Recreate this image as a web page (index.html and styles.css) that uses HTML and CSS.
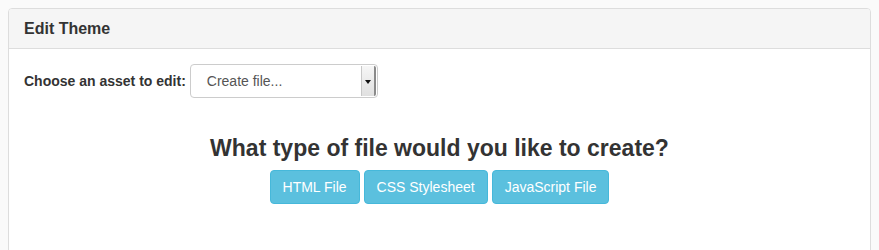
FILE: index.html
```html
<!DOCTYPE html>
<html lang="en">
<head>
  <meta charset="UTF-8" />
  <title>Edit Theme</title>
  <link rel="stylesheet" href="styles.css">
</head>
<body>
  <div class="panel">
    <div class="panel-heading">Edit Theme</div>
    <div class="panel-body">
      <div class="asset-row">
        <label class="asset-label">Choose an asset to edit:</label>
        <div class="fake-select">
          <span class="fake-select-text">Create file...</span>
          <span class="fake-select-arrow"></span>
        </div>
      </div>

      <div class="create-box">
        <h3>What type of file would you like to create?</h3>
        <div class="btn-row">
          <button class="btn btn-info">HTML File</button>
          <button class="btn btn-info">CSS Stylesheet</button>
          <button class="btn btn-info">JavaScript File</button>
        </div>
      </div>
    </div>
  </div>
</body>
</html>
```

FILE: styles.css
```css
* {
  box-sizing: border-box;
}

body {
  margin: 8px;
  background-color: #fafafa;
  color: #333;
  font-family: "Liberation Sans", Arial, sans-serif;
  font-size: 14px;
}

.panel {
  background-color: #fff;
  border: 1px solid #ddd;
  border-radius: 4px;
  min-height: 260px;
}

.panel-heading {
  background-color: #f5f5f5;
  border-bottom: 1px solid #ddd;
  border-radius: 3px 3px 0 0;
  height: 40px;
  padding: 0 15px;
  display: flex;
  align-items: center;
  font-size: 16px;
  font-weight: bold;
}

.panel-body {
  padding: 15px;
}

.asset-row {
  display: flex;
  align-items: center;
  gap: 4px;
}

.asset-label {
  font-size: 14px;
  font-weight: bold;
}

.fake-select {
  width: 188px;
  height: 34px;
  border: 1px solid #ccc;
  border-radius: 4px;
  display: flex;
  align-items: stretch;
  overflow: hidden;
}

.fake-select-text {
  flex: 1;
  display: flex;
  align-items: center;
  padding-left: 16px;
  color: #555;
  font-size: 14px;
}

.fake-select-arrow {
  width: 15px;
  margin: 1px 1px 1px 0;
  background: linear-gradient(#f6f6f6, #e0e0e0);
  border-left: 1px solid #c8c8c8;
  border-right: 2px solid #8a8a8a;
  border-radius: 0 2px 2px 0;
  position: relative;
}

.fake-select-arrow::after {
  content: "";
  position: absolute;
  left: 3px;
  top: 14px;
  border-left: 3px solid transparent;
  border-right: 3px solid transparent;
  border-top: 4px solid #111;
}

.create-box {
  display: flex;
  flex-direction: column;
  align-items: center;
  margin-top: 36px;
}

.create-box h3 {
  margin: 0 0 8px 0;
  font-size: 23px;
  font-weight: bold;
  line-height: 28px;
  color: #333;
}

.btn-row {
  display: flex;
  gap: 4px;
}

.btn {
  font-family: inherit;
  font-size: 14px;
  line-height: 20px;
  padding: 6px 12px;
  border-radius: 4px;
  border: 1px solid transparent;
  cursor: pointer;
}

.btn-info {
  color: #fff;
  background-color: #5bc0de;
  border-color: #46b8da;
}
```
